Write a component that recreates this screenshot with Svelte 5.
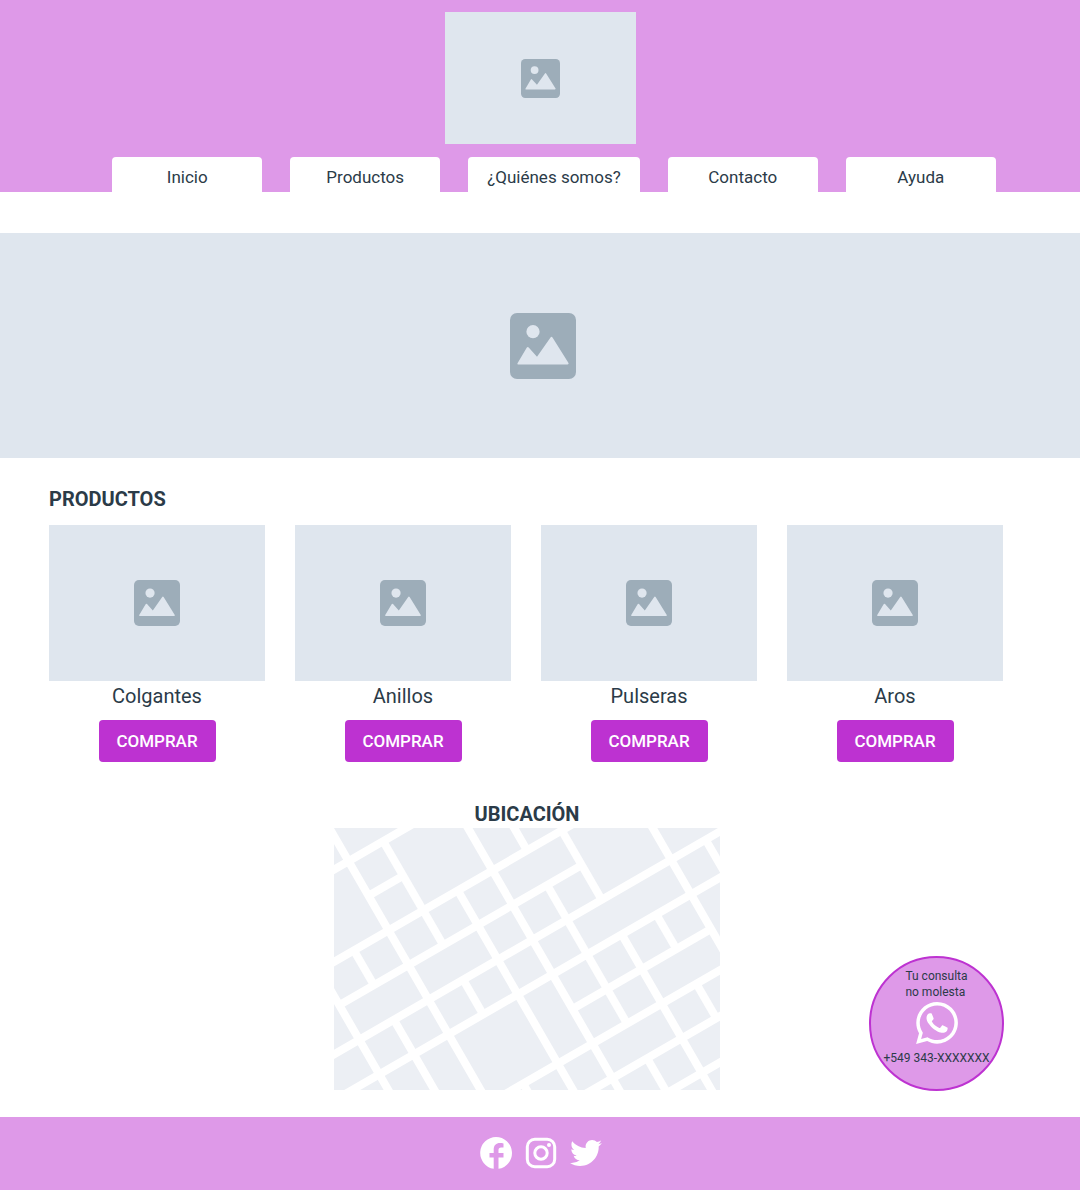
<script>
  const tabs = ['Inicio', 'Productos', '¿Quiénes somos?', 'Contacto', 'Ayuda'];
  const products = ['Colgantes', 'Anillos', 'Pulseras', 'Aros'];

  // Streets lie on a 40-unit grid that is turned by 30 degrees.
  const roads = [
    'M-200 36H400',
    'M-4 76H36',
    'M-200 116H400',
    'M-84 156H196',
    'M-200 196H400',
    'M-200 236H400',
    'M116 276H276',
    'M-200 316H400',
    'M-200 356H400',
    'M-200 396H400',
    'M-84 0V500',
    'M-44 116V156',
    'M-44 196V500',
    'M-4-100V500',
    'M36 36V156',
    'M36 196V236',
    'M36 316V500',
    'M76 116V500',
    'M116-100V500',
    'M156-100V116',
    'M156 156V316',
    'M156 356V396',
    'M196 116V196',
    'M196 236V500',
    'M236 236V276',
    'M236 316V356',
    'M276-100V500',
    'M316 196V236'
  ];
</script>

{#snippet picture()}
  <svg class="picture" viewBox="0 0 66 66" aria-hidden="true">
    <rect class="frame" width="66" height="66" rx="7" />
    <circle cx="23" cy="18.7" r="6.6" />
    <path d="M7.5 50.300 16.700 34.700Q17.700 33.200 18.700 34.600L27 43.700 40.500 24.400Q41.500 22.900 42.500 24.400L58.500 50.100Q59 51.500 57.500 51.500H8.400Q6.800 51.500 7.500 50.300Z" />
  </svg>
{/snippet}

<div class="page">
  <header>
    <div class="logo">{@render picture()}</div>
    <nav>
      {#each tabs as tab}
        <a href="#top">{tab}</a>
      {/each}
    </nav>
  </header>

  <div class="banner">{@render picture()}</div>

  <main>
    <section class="products">
      <h2>PRODUCTOS</h2>
      <div class="grid">
        {#each products as name}
          <article>
            <div class="photo">{@render picture()}</div>
            <h3>{name}</h3>
            <button type="button">COMPRAR</button>
          </article>
        {/each}
      </div>
    </section>

    <section class="location">
      <h2>UBICACIÓN</h2>
      <svg class="map" viewBox="0 0 386 262" role="img" aria-label="Mapa">
        <g transform="rotate(-30)">
          {#each roads as d}
            <path {d} />
          {/each}
        </g>
      </svg>
    </section>
  </main>

  <a class="bubble" href="#whatsapp">
    <span>Tu consulta<br />no molesta</span>
    <svg viewBox="2 2 20 20" aria-hidden="true">
      <path d="M12.04 2C6.58 2 2.13 6.45 2.13 11.91C2.13 13.66 2.59 15.36 3.45 16.86L2.05 22L7.3 20.62C8.75 21.41 10.38 21.83 12.04 21.83C17.5 21.83 21.95 17.38 21.95 11.92C21.95 9.27 20.92 6.78 19.05 4.91C17.18 3.03 14.69 2 12.04 2M12.05 3.67C14.25 3.67 16.31 4.53 17.87 6.09C19.42 7.65 20.28 9.72 20.28 11.92C20.28 16.46 16.58 20.15 12.04 20.15C10.56 20.15 9.11 19.76 7.85 19L7.55 18.83L4.43 19.65L5.26 16.61L5.06 16.29C4.24 15 3.8 13.47 3.8 11.91C3.81 7.37 7.5 3.67 12.05 3.67M8.53 7.33C8.37 7.33 8.1 7.39 7.87 7.64C7.65 7.89 7 8.5 7 9.71C7 10.93 7.89 12.1 8 12.27C8.14 12.44 9.76 14.94 12.25 16C12.84 16.27 13.3 16.42 13.66 16.53C14.25 16.72 14.79 16.69 15.22 16.63C15.7 16.56 16.68 16.03 16.89 15.45C17.1 14.87 17.1 14.38 17.04 14.27C16.97 14.17 16.81 14.11 16.56 14C16.31 13.86 15.09 13.26 14.87 13.18C14.64 13.1 14.5 13.06 14.31 13.3C14.15 13.55 13.67 14.11 13.53 14.27C13.38 14.44 13.24 14.46 13 14.34C12.74 14.21 11.94 13.95 11 13.11C10.26 12.45 9.77 11.64 9.62 11.39C9.5 11.15 9.61 11 9.73 10.89C9.84 10.78 10 10.6 10.1 10.45C10.23 10.31 10.27 10.2 10.35 10.04C10.43 9.87 10.39 9.73 10.33 9.61C10.27 9.5 9.77 8.26 9.56 7.77C9.36 7.29 9.16 7.35 9 7.34C8.86 7.34 8.7 7.33 8.53 7.33Z" />
    </svg>
    <span>+549 343-XXXXXXX</span>
  </a>

  <footer>
    <a href="#facebook" aria-label="Facebook">
      <svg viewBox="0 0 32 32">
        <path d="M16 0a16 16 0 0 0-2.3 31.8V20.600H9.500V16h4.200v-3.600C13.700 8.300 16.200 6 19.900 6c1.300 0 2.600.1 3.600.4v4h-2.300c-1.900 0-2.700 1-2.700 2.600v3h5v4.600h-5v11.200A16 16 0 0 0 16 0Z" />
      </svg>
    </a>
    <a href="#instagram" aria-label="Instagram">
      <svg viewBox="0 0 32 32">
        <rect class="line" x="2.300" y="2.300" width="27.400" height="27.400" rx="7.500" />
        <circle class="line" cx="16" cy="16" r="6.200" />
        <circle cx="24" cy="8" r="2" />
      </svg>
    </a>
    <a href="#twitter" aria-label="Twitter">
      <svg viewBox="1.5 2 21 21">
        <path d="M22.460 6C21.690 6.350 20.860 6.580 20 6.690C20.880 6.160 21.560 5.320 21.880 4.310C21.050 4.810 20.130 5.160 19.160 5.360C18.370 4.500 17.260 4 16 4C13.650 4 11.730 5.920 11.730 8.290C11.730 8.630 11.770 8.960 11.840 9.270C8.280 9.090 5.110 7.380 3 4.790C2.630 5.420 2.420 6.160 2.420 6.940C2.420 8.430 3.170 9.750 4.330 10.500C3.620 10.500 2.960 10.300 2.380 10V10.030C2.380 12.110 3.860 13.850 5.820 14.240A4.230 4.230 0 0 1 3.890 14.310A4.290 4.290 0 0 0 7.890 17.290A8.520 8.520 0 0 1 2.560 19.130C2.220 19.130 1.880 19.110 1.540 19.070C3.440 20.290 5.700 21 8.120 21C16 21 20.330 14.460 20.330 8.790C20.330 8.600 20.330 8.420 20.320 8.230C21.160 7.630 21.880 6.870 22.460 6Z" />
      </svg>
    </a>
  </footer>
</div>

<style>
  :global(body) {
    margin: 0;
    background: #fff;
  }

  .page {
    position: relative;
    font-family: Roboto, "Liberation Sans", sans-serif;
    color: #2b3b48;
  }

  a {
    color: inherit;
    text-decoration: none;
  }

  svg {
    display: block;
  }

  h2,
  h3 {
    margin: 0;
  }

  header {
    display: flex;
    flex-direction: column;
    align-items: center;
    gap: 13px;
    padding-top: 12px;
    background: #de99e8;
  }

  .logo,
  .banner,
  .photo {
    display: flex;
    align-items: center;
    justify-content: center;
    background: #dfe6ee;
  }

  .logo {
    width: 191px;
    height: 132px;
  }

  .logo .picture {
    width: 39px;
  }

  .picture {
    fill: #dfe6ee;
  }

  .frame {
    fill: #9dadb9;
  }

  nav {
    display: flex;
    gap: 28px;
    padding-left: 28px;
  }

  nav a {
    box-sizing: border-box;
    min-width: 150px;
    padding: 6px 19px 0;
    border-radius: 4px 4px 0 0;
    background: #fff;
    font-size: 17px;
    line-height: 29px;
    text-align: center;
    white-space: nowrap;
  }

  .banner {
    height: 225px;
    margin-top: 41px;
    padding-left: 6px;
  }

  .banner .picture {
    width: 66px;
  }

  .products {
    padding: 29px 77px 0 49px;
  }

  h2 {
    font-size: 20px;
    font-weight: 700;
    line-height: 24px;
  }

  .grid {
    display: grid;
    grid-template-columns: repeat(4, 1fr);
    gap: 30px;
    margin-top: 14px;
  }

  article {
    display: flex;
    flex-direction: column;
    align-items: center;
  }

  .photo {
    width: 100%;
    height: 156px;
  }

  .photo .picture {
    width: 46px;
  }

  h3 {
    font-size: 20px;
    font-weight: 400;
    line-height: 30px;
  }

  button {
    height: 42px;
    min-width: 117px;
    margin-top: 9px;
    padding: 0 16px;
    border: 0;
    border-radius: 4px;
    background: #bd32d1;
    color: #fff;
    font: 500 17px Roboto, "Liberation Sans", sans-serif;
  }

  .location {
    display: flex;
    flex-direction: column;
    align-items: center;
    gap: 2px;
    padding: 40px 26px 27px 0;
  }

  .map {
    width: 386px;
    max-width: 100%;
    background: #eceff4;
    fill: none;
    stroke: #fff;
    stroke-width: 8;
  }

  .bubble {
    position: absolute;
    right: 76px;
    bottom: 99px;
    display: flex;
    flex-direction: column;
    align-items: center;
    box-sizing: border-box;
    width: 135px;
    height: 135px;
    padding-top: 10px;
    border: 2px solid #bd32d1;
    border-radius: 50%;
    background: #de99e8;
    font-size: 12px;
    line-height: 16px;
    white-space: nowrap;
  }

  .bubble svg {
    width: 42px;
    margin: 2px 0 6px;
    fill: #fff;
  }

  footer {
    display: flex;
    align-items: center;
    justify-content: center;
    gap: 13px;
    box-sizing: border-box;
    height: 73px;
    padding: 0 0 2px 2px;
    background: #de99e8;
  }

  footer svg {
    width: 32px;
    fill: #fff;
  }

  footer .line {
    fill: none;
    stroke: #fff;
    stroke-width: 3;
  }
</style>
